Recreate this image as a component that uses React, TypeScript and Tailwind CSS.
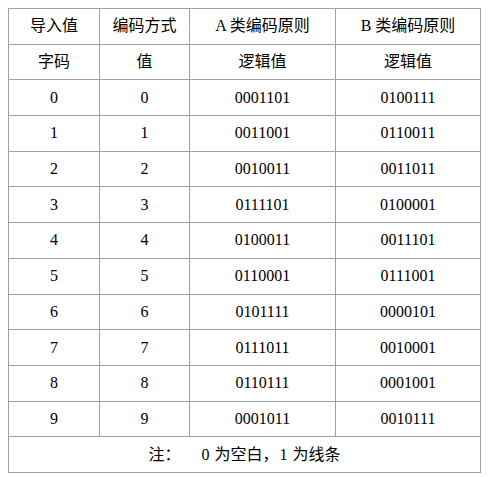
import React from 'react';

const rows: [string, string, string][] = [
  ['0', '0001101', '0100111'],
  ['1', '0011001', '0110011'],
  ['2', '0010011', '0011011'],
  ['3', '0111101', '0100001'],
  ['4', '0100011', '0011101'],
  ['5', '0110001', '0111001'],
  ['6', '0101111', '0000101'],
  ['7', '0111011', '0010001'],
  ['8', '0110111', '0001001'],
  ['9', '0001011', '0010111'],
];

const Cell: React.FC<{ children: React.ReactNode; className?: string }> = ({ children, className = '' }) => (
  <div className={`bg-white flex items-center justify-center text-[16px] text-black leading-none ${className}`}>
    {children}
  </div>
);

const App: React.FC = () => {
  return (
    <div className="w-[489px] h-[477px] bg-white pt-2 pl-2 font-['Liberation_Serif','Noto_Sans_CJK_SC',serif]">
      <div className="w-[473px] h-[465px] bg-[#a0a0a0] p-px grid grid-cols-[90px_89px_145px_144px] grid-rows-[repeat(13,minmax(0,1fr))] gap-px">
        <Cell>导入值</Cell>
        <Cell>编码方式</Cell>
        <Cell>A 类编码原则</Cell>
        <Cell>B 类编码原则</Cell>

        <Cell>字码</Cell>
        <Cell>值</Cell>
        <Cell>逻辑值</Cell>
        <Cell>逻辑值</Cell>

        {rows.map(([d, a, b]) => (
          <React.Fragment key={d}>
            <Cell>{d}</Cell>
            <Cell>{d}</Cell>
            <Cell>{a}</Cell>
            <Cell>{b}</Cell>
          </React.Fragment>
        ))}

        <Cell className="col-span-4">
          <span>注：</span>
          <span className="ml-[21px]">0</span>
          <span className="ml-[5px]">为空白，</span>
          <span className="ml-[1px]">1</span>
          <span className="ml-[5px]">为线条</span>
        </Cell>
      </div>
    </div>
  );
};

export default App;
